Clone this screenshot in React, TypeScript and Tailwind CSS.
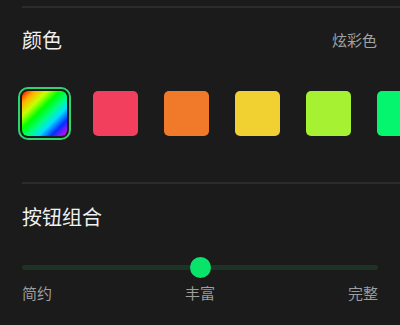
import React, { useState } from 'react';

const colors = ['#f33f5e', '#f07a29', '#f1d132', '#a6f132', '#05f66e'];

const App: React.FC = () => {
  const [selected, setSelected] = useState(-1);
  const [level, setLevel] = useState(1);
  const labels = ['简约', '丰富', '完整'];

  return (
    <div
      className="w-[400px] h-[325px] overflow-hidden bg-[#1b1b1b] text-white"
      style={{ fontFamily: '"Noto Sans CJK SC", "Noto Sans", sans-serif' }}
    >
      <div className="ml-[22px] mt-[6px] h-[2px] bg-[#2c2c2c]" />

      {/* color section */}
      <div className="flex items-center justify-between pl-[22px] pr-[23px] pt-[18px]">
        <h2 className="text-[20px] leading-[28px] text-[#f0f0f0]">颜色</h2>
        <span className="text-[15px] leading-[20px] text-[#a3a3a3]">炫彩色</span>
      </div>

      <div className="flex gap-[26px] pl-[22px] pt-[37px] pb-[4px] overflow-hidden">
        <button
          onClick={() => setSelected(-1)}
          className={`relative w-[45px] h-[45px] shrink-0 rounded-[6px] ${
            selected === -1 ? 'outline-2 outline-offset-2 outline-[#2fd36f]' : ''
          }`}
          style={{
            background:
              'linear-gradient(135deg, #ff0000 0%, #ffb000 14%, #c8ff00 28%, #00ff00 42%, #00ff80 56%, #00e0ff 68%, #0030ff 82%, #ff00ff 100%)',
          }}
        />
        {colors.map((c, i) => (
          <button
            key={c}
            onClick={() => setSelected(i)}
            className={`w-[45px] h-[45px] shrink-0 rounded-[5px] ${
              selected === i ? 'outline-2 outline-offset-2 outline-[#2fd36f]' : ''
            }`}
            style={{ backgroundColor: c }}
          />
        ))}
      </div>

      <div className="ml-[22px] mt-[42px] h-[2px] bg-[#2c2c2c]" />

      {/* button group section */}
      <div className="pl-[22px] pt-[19px]">
        <h2 className="text-[20px] leading-[28px] text-[#f0f0f0]">按钮组合</h2>
      </div>

      <div className="pl-[22px] pr-[22px] pt-[26px]">
        <div className="relative h-[21px] flex items-center">
          <div className="w-full h-[5px] rounded-full bg-[#1d3325]" />
          <button
            onClick={() => setLevel((level + 1) % 3)}
            className="absolute top-0 w-[21px] h-[21px] rounded-full bg-[#08e46a]"
            style={{ left: `calc(${level * 50}% - 10.5px)` }}
          />
        </div>
        <div className="flex justify-between pt-[5px] text-[15px] leading-[20px] text-[#9d9d9d]">
          {labels.map((l, i) => (
            <span key={l} onClick={() => setLevel(i)}>
              {l}
            </span>
          ))}
        </div>
      </div>
    </div>
  );
};

export default App;
